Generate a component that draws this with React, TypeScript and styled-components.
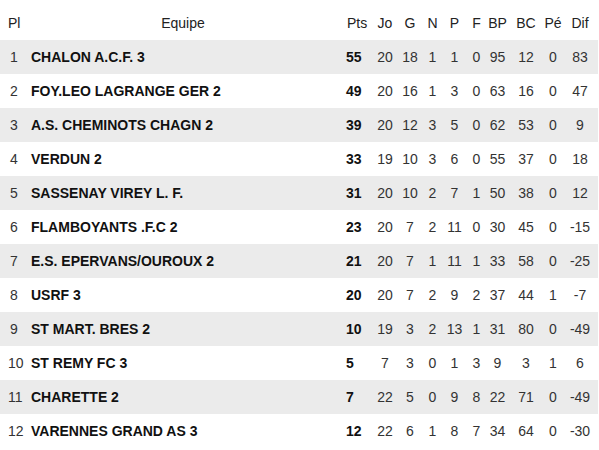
import React from 'react';
import styled, { createGlobalStyle } from 'styled-components';

const GlobalStyle = createGlobalStyle`
  html, body {
    margin: 0;
    padding: 0;
    background: #fff;
  }
  body {
    font-family: "Liberation Sans", Arial, sans-serif;
    font-size: 14px;
    color: #222;
  }
`;

const Wrapper = styled.div`
  width: 599px;
  padding-top: 6px;
`;

const Table = styled.table`
  width: 598px;
  table-layout: fixed;
  border-collapse: collapse;
`;

const HeadCell = styled.th<{ $align?: string; $pad?: number }>`
  height: 34px;
  padding: 0 0 0 ${(p) => p.$pad ?? 0}px;
  font-weight: normal;
  text-align: ${(p) => p.$align ?? 'center'};
  color: #222;
`;

const Row = styled.tr<{ $shade: boolean }>`
  height: 34px;
  background: ${(p) => (p.$shade ? '#ebebeb' : '#fff')};
`;

const Cell = styled.td<{ $align?: string; $pad?: number; $bold?: boolean }>`
  padding: 0 0 0 ${(p) => p.$pad ?? 0}px;
  text-align: ${(p) => p.$align ?? 'center'};
  font-weight: ${(p) => (p.$bold ? 'bold' : 'normal')};
  color: ${(p) => (p.$bold ? '#111' : '#333')};
  white-space: nowrap;
`;

const widths = [23, 320, 29, 26, 24, 21, 23, 21, 21, 36, 18, 36];

type Team = [string, number, number, number, number, number, number, number, number, number, number];

const teams: Team[] = [
  ['CHALON A.C.F. 3', 55, 20, 18, 1, 1, 0, 95, 12, 0, 83],
  ['FOY.LEO LAGRANGE GER 2', 49, 20, 16, 1, 3, 0, 63, 16, 0, 47],
  ['A.S. CHEMINOTS CHAGN 2', 39, 20, 12, 3, 5, 0, 62, 53, 0, 9],
  ['VERDUN 2', 33, 19, 10, 3, 6, 0, 55, 37, 0, 18],
  ['SASSENAY VIREY L. F.', 31, 20, 10, 2, 7, 1, 50, 38, 0, 12],
  ['FLAMBOYANTS .F.C 2', 23, 20, 7, 2, 11, 0, 30, 45, 0, -15],
  ['E.S. EPERVANS/OUROUX 2', 21, 20, 7, 1, 11, 1, 33, 58, 0, -25],
  ['USRF 3', 20, 20, 7, 2, 9, 2, 37, 44, 1, -7],
  ['ST MART. BRES 2', 10, 19, 3, 2, 13, 1, 31, 80, 0, -49],
  ['ST REMY FC 3', 5, 7, 3, 0, 1, 3, 9, 3, 1, 6],
  ['CHARETTE 2', 7, 22, 5, 0, 9, 8, 22, 71, 0, -49],
  ['VARENNES GRAND AS 3', 12, 22, 6, 1, 8, 7, 34, 64, 0, -30],
];

const heads = ['Jo', 'G', 'N', 'P', 'F', 'BP', 'BC', 'Pé', 'Dif'];

const App: React.FC = () => {
  return (
    <Wrapper>
      <GlobalStyle />
      <Table>
        <colgroup>
          {widths.map((w, i) => (
            <col key={i} style={{ width: w }} />
          ))}
        </colgroup>
        <thead>
          <tr>
            <HeadCell $align="left" $pad={8}>Pl</HeadCell>
            <HeadCell>Equipe</HeadCell>
            <HeadCell $align="left" $pad={4}>Pts</HeadCell>
            {heads.map((h) => (
              <HeadCell key={h}>{h}</HeadCell>
            ))}
          </tr>
        </thead>
        <tbody>
          {teams.map((t, i) => {
            const [name, pts, ...rest] = t;
            return (
              <Row key={name} $shade={i % 2 === 0}>
                <Cell $align="left" $pad={i < 9 ? 10 : 8}>{i + 1}</Cell>
                <Cell $align="left" $pad={8} $bold>{name}</Cell>
                <Cell $align="left" $pad={3} $bold>{pts}</Cell>
                {rest.map((v, j) => (
                  <Cell key={j}>{v}</Cell>
                ))}
              </Row>
            );
          })}
        </tbody>
      </Table>
    </Wrapper>
  );
};

export default App;
